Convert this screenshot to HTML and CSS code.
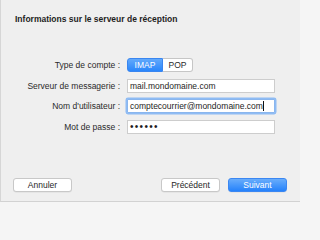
FILE: index.html
```html
<!DOCTYPE html>
<html lang="fr">
<head>
<meta charset="utf-8">
<title>Informations sur le serveur de réception</title>
<link rel="stylesheet" href="styles.css">
</head>
<body>
<div class="window">
  <div class="title">Informations sur le serveur de réception</div>
  <div class="form">
    <div class="label">Type de compte :</div>
    <div class="segmented">
      <span class="seg seg-on">IMAP</span>
      <span class="seg">POP</span>
    </div>
    <div class="label">Serveur de messagerie :</div>
    <div class="field">mail.mondomaine.com</div>
    <div class="label">Nom d'utilisateur :</div>
    <div class="field focused">comptecourrier@mondomaine.com<span class="caret"></span></div>
    <div class="label">Mot de passe :</div>
    <div class="field"><span class="dots">••••••</span></div>
  </div>
  <div class="buttons">
    <div class="btn">Annuler</div>
    <div class="spacer"></div>
    <div class="btn">Précédent</div>
    <div class="btn btn-primary">Suivant</div>
  </div>
</div>
</body>
</html>
```
FILE: styles.css
```css
html, body {
  margin: 0;
  padding: 0;
}
body {
  width: 300px;
  height: 205px;
  background: #f5f5f5;
  font-family: "Liberation Sans", Arial, sans-serif;
  font-size: 8.5px;
  color: #262626;
  overflow: hidden;
}
.window {
  box-sizing: border-box;
  width: 300px;
  height: 202px;
  background: #efefef;
  border-left: 1px solid #d6d6d6;
  border-bottom: 1px solid #d2d2d2;
  display: flex;
  flex-direction: column;
}
.title {
  font-weight: bold;
  line-height: 10px;
  margin: 14px 0 0 14px;
  color: #1e1e1e;
}
.form {
  margin-top: 34px;
  display: grid;
  grid-template-columns: 119px 148px;
  column-gap: 7px;
  row-gap: 6.5px;
  align-items: center;
}
.label {
  text-align: right;
  line-height: 14px;
  color: #2a2a2a;
}
.segmented {
  display: flex;
  height: 14px;
  width: 66px;
}
.seg {
  box-sizing: border-box;
  height: 14px;
  line-height: 13px;
  text-align: center;
  background: #fff;
  border: 1px solid #c6c6c6;
  border-left: none;
  border-radius: 0 3px 3px 0;
  width: 30px;
  color: #2a2a2a;
}
.seg-on {
  width: 36px;
  border: 1px solid #3a86f0;
  border-radius: 3px 0 0 3px;
  background: linear-gradient(#62a9fb, #2a86fb);
  color: #fff;
}
.field {
  box-sizing: border-box;
  height: 14px;
  line-height: 13px;
  background: #fff;
  border: 1px solid #cdcdcd;
  padding-left: 2px;
  color: #1e1e1e;
  white-space: nowrap;
  overflow: hidden;
}
.focused {
  border-color: #8ab6ee;
  box-shadow: 0 0 0 1.5px #8fbcf4;
  border-radius: 1px;
}
.caret {
  display: inline-block;
  width: 1px;
  height: 10px;
  background: #111;
  vertical-align: -2px;
}
.dots {
  font-size: 10px;
  letter-spacing: 1.3px;
  line-height: 12px;
}
.buttons {
  margin-top: auto;
  margin-bottom: 9px;
  padding: 0 13px 0 12px;
  display: flex;
  gap: 8px;
}
.spacer {
  flex: 1;
}
.btn {
  box-sizing: border-box;
  height: 14px;
  width: 59px;
  line-height: 12px;
  text-align: center;
  background: #fff;
  border: 1px solid #c8c8c8;
  border-radius: 3px;
  box-shadow: 0 0.5px 0 rgba(0,0,0,0.08);
  color: #262626;
}
.btn-primary {
  border-color: #3b87f2;
  background: linear-gradient(#69adfb, #2582fb);
  color: #fff;
}
```
